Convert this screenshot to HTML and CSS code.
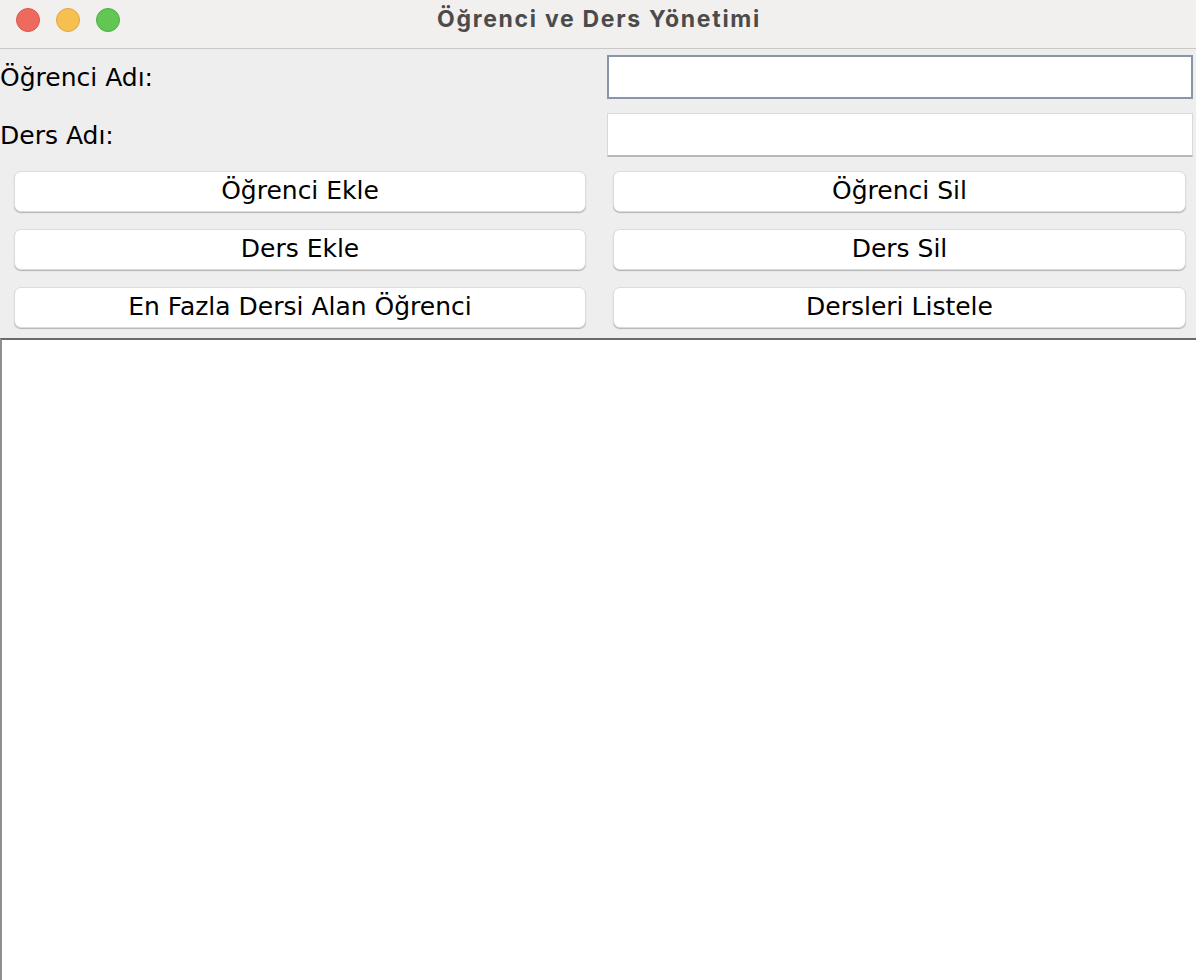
FILE: index.html
```html
<!DOCTYPE html>
<html lang="tr">
<head>
<meta charset="utf-8">
<title>Öğrenci ve Ders Yönetimi</title>
<link rel="stylesheet" href="styles.css">
</head>
<body>
<div class="window">
  <header class="titlebar">
    <div class="lights">
      <span class="light red"></span>
      <span class="light yellow"></span>
      <span class="light green"></span>
    </div>
    <div class="title">Öğrenci ve Ders Yönetimi</div>
  </header>
  <main class="form">
    <div class="field-row">
      <label class="label">Öğrenci Adı:</label>
      <input class="input focused" type="text">
    </div>
    <div class="field-row">
      <label class="label">Ders Adı:</label>
      <input class="input" type="text">
    </div>
    <div class="buttons">
      <button class="btn">Öğrenci Ekle</button>
      <button class="btn">Öğrenci Sil</button>
      <button class="btn">Ders Ekle</button>
      <button class="btn">Ders Sil</button>
      <button class="btn">En Fazla Dersi Alan Öğrenci</button>
      <button class="btn">Dersleri Listele</button>
    </div>
  </main>
  <textarea class="output"></textarea>
</div>
</body>
</html>
```
FILE: styles.css
```css
* { box-sizing: border-box; }
html, body {
  margin: 0;
  padding: 0;
  width: 1196px;
  height: 980px;
  overflow: hidden;
  background: #eeeeee;
}
.window {
  display: flex;
  flex-direction: column;
  height: 980px;
}
.titlebar {
  position: relative;
  height: 49px;
  flex: none;
  background: #f1f0ef;
  border-bottom: 1px solid #c9c8c7;
  display: flex;
  align-items: center;
  justify-content: center;
}
.lights {
  position: absolute;
  left: 16px;
  top: 8px;
  display: flex;
  gap: 16px;
}
.light {
  width: 24px;
  height: 24px;
  border-radius: 50%;
  display: block;
}
.red { background: #ee6a5f; border: 1px solid #d9574d; }
.yellow { background: #f6c050; border: 1px solid #dea83c; }
.green { background: #62c655; border: 1px solid #4fae44; }
.title {
  font-family: Inter, "Liberation Sans", sans-serif;
  font-weight: 700;
  font-size: 23px;
  letter-spacing: 1.7px;
  color: #4b4b4b;
  margin-top: -10px;
  margin-left: 2px;
}
.form {
  flex: none;
  padding-top: 6px;
  font-family: "DejaVu Sans", sans-serif;
}
.field-row {
  display: grid;
  grid-template-columns: 607px 586px;
  height: 44px;
  margin-bottom: 14px;
  align-items: center;
}
.label {
  font-size: 25px;
  color: #000;
  padding-left: 0;
}
.input {
  height: 44px;
  width: 586px;
  background: #fff;
  border: 1px solid #d9d9d9;
  border-bottom: 2px solid #b9b9b9;
  outline: none;
  margin: 0;
  padding: 0 6px;
}
.input.focused {
  border: 2px solid #8796a8;
}
.buttons {
  display: grid;
  grid-template-columns: 572px 573px;
  column-gap: 27px;
  row-gap: 17px;
  padding-left: 14px;
  padding-bottom: 10px;
}
.btn {
  height: 41px;
  background: #fff;
  border: 1px solid #dcdcdc;
  border-radius: 7px;
  box-shadow: 0 1px 1px rgba(0,0,0,0.25);
  font-family: "DejaVu Sans", sans-serif;
  font-size: 25px;
  color: #000;
  padding: 0 0 2px 0;
  margin: 0;
}
.output {
  flex: 1;
  display: block;
  width: 1196px;
  margin: 0;
  background: #fff;
  border: none;
  border-top: 2px solid #6a6a6a;
  border-left: 2px solid #8e8e8e;
  resize: none;
  outline: none;
}
```
